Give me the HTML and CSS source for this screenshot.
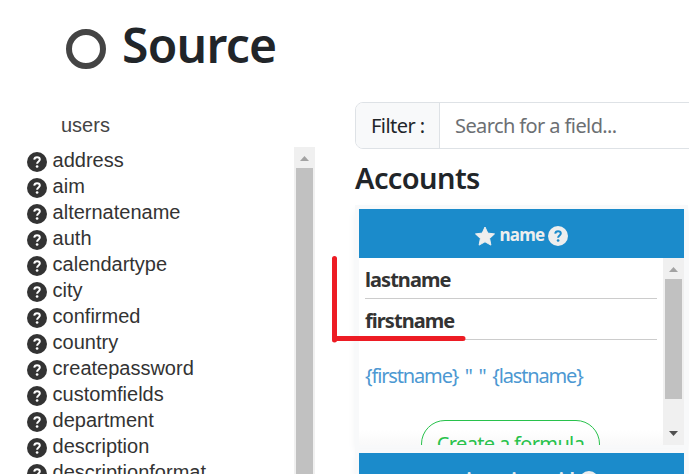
FILE: index.html
```html
<!DOCTYPE html>
<html lang="en">
<head>
<meta charset="utf-8">
<title>Source</title>
<link rel="stylesheet" href="styles.css">
</head>
<body>
<svg class="defs" width="0" height="0">
  <symbol id="help" viewBox="0 0 20 20">
    <circle cx="10" cy="10" r="10" fill="currentColor"/>
    <path class="mark" d="M7.200 7.700C7.400 6 8.500 5.200 10 5.200c1.700 0 2.800.9 2.800 2.300 0 1.900-2.700 2-2.700 4.300" fill="none" stroke-width="2"/>
    <circle class="dot" cx="10.100" cy="14.500" r="1.350"/>
  </symbol>
</svg>
<header class="heading">
  <span class="ring"></span>
  <h1>Source</h1>
</header>
<main class="columns">
  <section class="source">
    <h2 class="table-name">users</h2>
    <div class="field-box">
      <ul class="fields">
        <li><svg class="help"><use href="#help"/></svg>address</li>
        <li><svg class="help"><use href="#help"/></svg>aim</li>
        <li><svg class="help"><use href="#help"/></svg>alternatename</li>
        <li><svg class="help"><use href="#help"/></svg>auth</li>
        <li><svg class="help"><use href="#help"/></svg>calendartype</li>
        <li><svg class="help"><use href="#help"/></svg>city</li>
        <li><svg class="help"><use href="#help"/></svg>confirmed</li>
        <li><svg class="help"><use href="#help"/></svg>country</li>
        <li><svg class="help"><use href="#help"/></svg>createpassword</li>
        <li><svg class="help"><use href="#help"/></svg>customfields</li>
        <li><svg class="help"><use href="#help"/></svg>department</li>
        <li><svg class="help"><use href="#help"/></svg>description</li>
        <li><svg class="help"><use href="#help"/></svg>descriptionformat</li>
      </ul>
      <div class="scrollbar"><span class="up"></span><span class="thumb"></span></div>
    </div>
  </section>
  <section class="target">
    <div class="filter"><label>Filter :</label><div class="search"><span>Search for a field...</span></div></div>
    <h2 class="group"><span>Accounts</span></h2>
    <div class="cards">
      <article class="card">
        <h3 class="bar">
          <svg class="star" viewBox="0 0 20 19"><path d="M10 .5l2.800 6.100 6.700.8-4.900 4.600 1.300 6.600L10 15.300l-5.900 3.300L5.400 12 .5 7.400l6.700-.8z" fill="currentColor" stroke="currentColor" stroke-linejoin="round"/></svg>
          <span class="bar-text">name</span>
          <svg class="help"><use href="#help"/></svg>
        </h3>
        <div class="card-body">
          <div class="content">
            <div class="mapped">lastname</div>
            <div class="mapped">firstname</div>
            <p class="formula">{firstname} " " {lastname}</p>
            <div class="create">Create a formula</div>
          </div>
          <div class="scrollbar"><span class="up"></span><span class="thumb"></span><span class="down"></span></div>
        </div>
        <svg class="annotation" viewBox="0 0 135 88"><path d="M3.500 2.500V84M3.500 82.500H132" fill="none" stroke="#ed1c24" stroke-width="5" stroke-linecap="round"/></svg>
      </article>
      <article class="card next">
        <h3 class="bar">
          <span class="bar-text">unique_item_id</span>
          <svg class="help"><use href="#help"/></svg>
        </h3>
      </article>
    </div>
  </section>
</main>
</body>
</html>
```

FILE: styles.css
```css
* { box-sizing: border-box; }
body {
  margin: 0;
  width: 689px;
  height: 474px;
  overflow: hidden;
  background: #fff;
  color: #212529;
  font: 20px/30px "Noto Sans", sans-serif;
}
h1, h2, h3, p, ul { margin: 0; padding: 0; }
.defs { position: absolute; }
.heading { display: flex; height: 102px; padding: 16px 0 0 66px; }
.ring { width: 40px; height: 40px; margin: 13px 16px 0 0; border: 6px solid #444; border-radius: 50%; }
h1 { font-size: 48px; line-height: 58px; font-weight: 600; letter-spacing: -.7px; }
.columns { display: flex; height: 372px; overflow: hidden; }
.source { width: 355px; font-family: "Liberation Sans", sans-serif; color: #333; }
.table-name { height: 45px; padding: 9px 0 0 61px; font-size: 20px; line-height: 28px; font-weight: 400; color: #444; }
.field-box { display: flex; justify-content: space-between; width: 315px; height: 327px; padding-left: 27px; overflow: hidden; }
.fields { list-style: none; }
.fields li { display: flex; height: 26px; font-size: 20px; line-height: 26px; white-space: nowrap; }
.help { width: 20px; height: 20px; flex: none; color: #333; }
.fields .help { margin: 5px 5.600px 0 0; }
.mark { stroke: var(--mark, #fff); }
.dot { fill: var(--mark, #fff); }
.scrollbar { width: 21px; flex: none; background: #f0f0f0; display: flex; flex-direction: column; align-items: center; }
.up { width: 9px; height: 5px; margin: 9px 0 7px; background: #a3a3a3; clip-path: polygon(50% 0, 100% 100%, 0 100%); }
.thumb { width: 17px; flex: 1; background: #c1c1c1; }
.down { width: 9px; height: 5px; background: #505050; clip-path: polygon(0 0, 100% 0, 50% 100%); }
.target { width: 334px; }
.filter { display: flex; width: 344px; height: 47px; border: 1px solid #dee2e6; border-radius: 8px; line-height: 45px; overflow: hidden; }
.filter label { width: 84px; padding-left: 15px; background: #f8f9fa; border-right: 1px solid #dee2e6; letter-spacing: -.55px; }
.search { padding-left: 15px; color: #6c6f73; letter-spacing: -.6px; }
.group { height: 57px; padding-top: 11px; font-size: 29px; line-height: 36px; font-weight: 600; letter-spacing: -.6px; }
.cards { padding: 3px 0 0 4px; }
.card { position: relative; width: 325px; height: 236px; box-shadow: 0 0 0 4px #f8f9fa, 0 4px 9px 2px #e9ebed; }
.bar { display: flex; justify-content: center; height: 49px; padding: 11px 0 0; gap: 5px; background: #1b8bcb; color: #eee; font-size: 17px; line-height: 29px; }
.bar svg { color: #eee; margin-top: 6px; }
.bar .help { --mark: #1b8bcb; margin-left: -1px; }
.bar-text { letter-spacing: -.8px; }
.star { width: 20px; height: 20px; }
.card-body { display: flex; height: 187px; overflow: hidden; background: #fff; }
.content { width: 304px; height: 187px; padding: 0 6px; background: linear-gradient(#fff 92%, #f9f9f9); overflow: hidden; }
.mapped { width: 292px; height: 41px; border-bottom: 1px solid #ccc; color: #333; font-weight: 700; line-height: 43px; letter-spacing: -.95px; }
.formula { margin-top: 21px; color: #4c98d2; letter-spacing: -1.150px; word-spacing: 2.600px; }
.create { width: 179px; height: 48px; margin: 29px 0 0 56px; border: 1px solid #28c24c; border-radius: 24px; text-align: center; color: #28c24c; line-height: 46px; letter-spacing: -.65px; white-space: nowrap; }
.card .thumb { flex: none; height: 120px; }
.card .down { margin-top: 32px; }
.annotation { position: absolute; left: -28px; top: 47px; width: 135px; height: 88px; }
.next { height: 21px; margin-top: 8px; }
.next .bar { height: 21px; padding-top: 12px; overflow: hidden; }
.next .bar-text { letter-spacing: .2px; }
```
